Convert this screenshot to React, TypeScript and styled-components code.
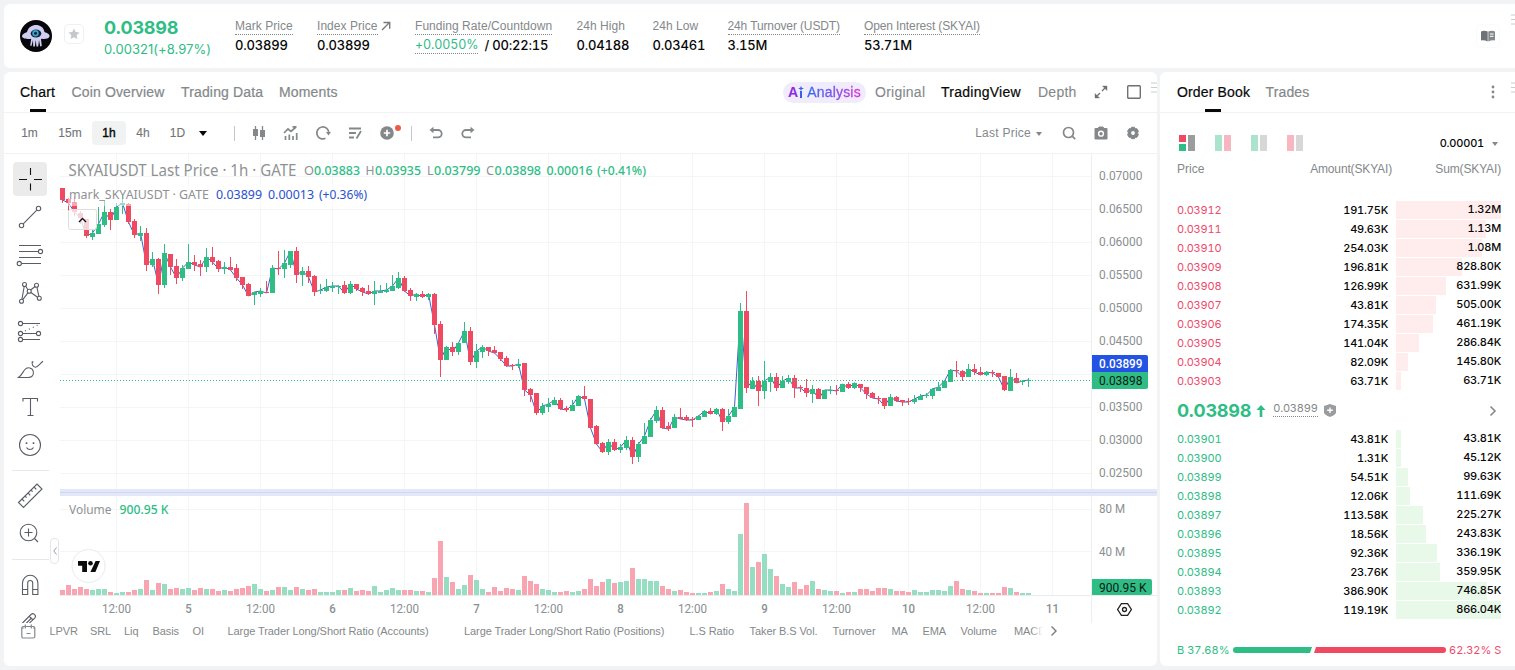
import React from "react";
import styled, { createGlobalStyle } from "styled-components";

const GREEN = "#2ebd85";
const RED = "#f04a63";
const GREY = "#84888a";

// [up(1)/down(0), high, body top, body bottom, low, volume]
const candles: number[][] = [
  [0, 188, 188, 200, 203, 5], [0, 198, 199, 203, 211, 10], [0, 196, 202, 212, 216, 6], [0, 211, 213, 218, 224, 8],
  [0, 219, 219, 236, 238, 6], [1, 230, 233, 237, 240, 5], [1, 207, 224, 234, 234, 6], [1, 200, 212, 225, 227, 6],
  [0, 209, 212, 220, 230, 3], [1, 203, 207, 220, 220, 2], [1, 194, 203, 205, 214, 3], [0, 203, 204, 222, 224, 3],
  [0, 219, 221, 235, 238, 5], [1, 226, 233, 236, 241, 6], [0, 228, 233, 265, 271, 15], [1, 252, 259, 265, 267, 5],
  [0, 258, 259, 285, 294, 12], [1, 244, 253, 285, 288, 11], [0, 254, 254, 267, 275, 6], [0, 259, 266, 278, 284, 7],
  [1, 265, 268, 278, 281, 6], [1, 244, 262, 269, 269, 7], [0, 255, 262, 265, 271, 5], [0, 260, 264, 267, 276, 7],
  [1, 248, 257, 267, 272, 6], [0, 247, 257, 262, 265, 6], [0, 260, 261, 269, 272, 4], [1, 262, 267, 269, 274, 5],
  [0, 257, 267, 270, 270, 4], [0, 264, 268, 278, 281, 6], [0, 277, 277, 285, 289, 7], [0, 283, 284, 296, 296, 9],
  [1, 292, 292, 295, 305, 11], [1, 288, 291, 294, 297, 6], [0, 281, 292, 293, 293, 4], [1, 265, 268, 293, 293, 5],
  [0, 251, 268, 269, 275, 8], [1, 250, 263, 269, 278, 8], [1, 251, 251, 265, 268, 5], [0, 247, 251, 275, 283, 8],
  [1, 267, 271, 275, 286, 6], [0, 266, 271, 277, 283, 5], [0, 275, 276, 292, 296, 6], [1, 284, 290, 291, 294, 3],
  [1, 279, 287, 291, 292, 3], [1, 282, 286, 288, 292, 3], [1, 285, 286, 287, 294, 5], [0, 281, 285, 293, 294, 5],
  [1, 281, 284, 293, 294, 7], [0, 284, 284, 289, 291, 4], [0, 287, 288, 292, 296, 5], [0, 285, 291, 294, 295, 4],
  [1, 281, 291, 294, 305, 9], [1, 285, 291, 293, 293, 3], [1, 283, 290, 292, 293, 5], [1, 275, 286, 291, 291, 7],
  [1, 272, 278, 288, 289, 5], [0, 276, 278, 291, 292, 5], [0, 288, 290, 296, 301, 5], [1, 293, 294, 297, 301, 4],
  [0, 291, 294, 297, 298, 4], [1, 293, 294, 297, 300, 3], [0, 293, 294, 325, 334, 17], [0, 321, 324, 360, 377, 54],
  [1, 346, 347, 360, 360, 18], [0, 342, 347, 352, 356, 13], [1, 342, 343, 352, 355, 6], [1, 322, 331, 343, 343, 10],
  [0, 327, 331, 362, 365, 20], [1, 344, 351, 362, 368, 15], [1, 345, 347, 352, 358, 6], [0, 347, 347, 351, 356, 3],
  [0, 346, 350, 353, 353, 8], [0, 352, 352, 359, 361, 4], [0, 356, 358, 366, 367, 7], [0, 364, 365, 366, 370, 6],
  [1, 359, 364, 366, 368, 5], [0, 363, 363, 390, 396, 19], [0, 388, 389, 395, 402, 14], [0, 393, 393, 413, 415, 11],
  [1, 403, 406, 413, 415, 6], [1, 398, 404, 407, 412, 5], [1, 397, 400, 405, 405, 3], [0, 398, 400, 409, 410, 3],
  [0, 406, 408, 410, 412, 4], [1, 400, 405, 411, 411, 3], [1, 395, 396, 406, 406, 4], [0, 386, 396, 399, 400, 6],
  [0, 399, 399, 428, 429, 16], [0, 425, 426, 444, 445, 9], [0, 442, 443, 452, 453, 13], [1, 439, 442, 452, 455, 16],
  [0, 439, 442, 450, 451, 12], [1, 444, 447, 450, 453, 13], [1, 436, 440, 448, 450, 14], [0, 437, 440, 457, 464, 27],
  [1, 442, 444, 457, 462, 16], [1, 423, 436, 444, 444, 16], [1, 418, 420, 437, 437, 14], [1, 406, 410, 421, 423, 14],
  [0, 407, 410, 428, 429, 9], [0, 422, 426, 429, 431, 6], [1, 414, 417, 428, 428, 4], [0, 408, 417, 419, 419, 5],
  [0, 415, 417, 420, 421, 3], [0, 417, 419, 420, 427, 2], [1, 415, 416, 420, 420, 2], [1, 410, 411, 417, 417, 2],
  [0, 408, 411, 414, 414, 3], [1, 408, 409, 414, 415, 4], [0, 408, 409, 422, 431, 11], [1, 409, 416, 422, 424, 6],
  [1, 406, 407, 417, 417, 4], [1, 303, 311, 409, 409, 61], [0, 291, 311, 388, 393, 92], [1, 377, 381, 389, 389, 28],
  [0, 376, 381, 391, 406, 33], [1, 361, 381, 391, 399, 41], [1, 373, 377, 382, 392, 26], [0, 373, 377, 388, 391, 19],
  [1, 376, 381, 388, 388, 11], [1, 375, 378, 382, 384, 8], [0, 375, 378, 388, 398, 13], [0, 385, 387, 388, 392, 6],
  [0, 379, 388, 393, 397, 10], [1, 385, 389, 394, 403, 14], [0, 388, 389, 399, 399, 6], [1, 390, 390, 399, 399, 5],
  [1, 386, 390, 391, 394, 4], [0, 385, 390, 391, 395, 4], [1, 384, 384, 392, 392, 2], [0, 382, 384, 388, 389, 3],
  [1, 383, 383, 388, 389, 3], [0, 384, 384, 388, 392, 6], [0, 387, 387, 394, 399, 6], [0, 392, 393, 398, 398, 4],
  [0, 396, 398, 399, 404, 7], [0, 398, 398, 406, 409, 7], [1, 394, 397, 406, 406, 6], [0, 396, 397, 401, 402, 4],
  [0, 400, 400, 402, 406, 4], [0, 398, 401, 402, 405, 3], [1, 395, 399, 402, 404, 5], [1, 394, 396, 400, 400, 3],
  [1, 393, 395, 396, 398, 3], [1, 388, 389, 396, 399, 5], [1, 382, 387, 391, 391, 5], [1, 381, 381, 388, 388, 4],
  [1, 369, 370, 382, 382, 9], [0, 361, 370, 371, 377, 14], [0, 370, 371, 377, 381, 6], [1, 364, 369, 377, 377, 5],
  [0, 364, 369, 372, 375, 4], [0, 367, 372, 375, 375, 2], [1, 371, 372, 375, 376, 2], [0, 370, 372, 373, 377, 2],
  [0, 373, 373, 377, 377, 2], [0, 376, 376, 390, 391, 8], [1, 369, 377, 391, 391, 7], [0, 373, 378, 383, 383, 3],
  [1, 380, 381, 382, 385, 2], [1, 378, 380, 381, 387, 2],
];

const stats = [
  { label: "Mark Price", value: "0.03899", width: 58, dotted: true },
  { label: "Index Price", value: "0.03899", width: 74, dotted: true, arrow: true },
  { label: "Funding Rate/Countdown", rate: "+0.0050%", value: "/ 00:22:15", width: 137.5, dotted: true },
  { label: "24h High", value: "0.04188", width: 52 },
  { label: "24h Low", value: "0.03461", width: 51 },
  { label: "24h Turnover (USDT)", value: "3.15M", width: 112.5, dotted: true, tight: true },
  { label: "Open Interest (SKYAI)", value: "53.71M", width: 116, dotted: true, tight: true },
];

const asks = [
  ["0.03912", "191.75K", "1.32M", 1320],
  ["0.03911", "49.63K", "1.13M", 1130],
  ["0.03910", "254.03K", "1.08M", 1080],
  ["0.03909", "196.81K", "828.80K", 828.8],
  ["0.03908", "126.99K", "631.99K", 631.99],
  ["0.03907", "43.81K", "505.00K", 505],
  ["0.03906", "174.35K", "461.19K", 461.19],
  ["0.03905", "141.04K", "286.84K", 286.84],
  ["0.03904", "82.09K", "145.80K", 145.8],
  ["0.03903", "63.71K", "63.71K", 63.71],
] as const;

const bids = [
  ["0.03901", "43.81K", "43.81K", 43.81],
  ["0.03900", "1.31K", "45.12K", 45.12],
  ["0.03899", "54.51K", "99.63K", 99.63],
  ["0.03898", "12.06K", "111.69K", 111.69],
  ["0.03897", "113.58K", "225.27K", 225.27],
  ["0.03896", "18.56K", "243.83K", 243.83],
  ["0.03895", "92.36K", "336.19K", 336.19],
  ["0.03894", "23.76K", "359.95K", 359.95],
  ["0.03893", "386.90K", "746.85K", 746.85],
  ["0.03892", "119.19K", "866.04K", 866.04],
] as const;

// label and the width of its slot
const indicators: [string, number][] = [
  ["LPVR", 40.5], ["SRL", 34], ["Liq", 28.5], ["Basis", 40], ["OI", 35],
  ["Large Trader Long/Short Ratio (Accounts)", 236.5],
  ["Large Trader Long/Short Ratio (Positions)", 225.5],
  ["L.S Ratio", 60], ["Taker B.S Vol.", 83], ["Turnover", 59], ["MA", 31], ["EMA", 38], ["Volume", 53.5], ["MACD", 32],
];

const priceTicks = ["0.07000", "0.06500", "0.06000", "0.05500", "0.05000", "0.04500", "", "0.03500", "0.03000", "0.02500"];
const timeTicks = ["12:00", "5", "12:00", "6", "12:00", "7", "12:00", "8", "12:00", "9", "12:00", "10", "12:00", "11"];

const Label = ({ x, y, w, size = 12, fill = "#8b8f91", weight = 400, font = "Roboto, sans-serif", children }: {
  x: number; y: number; w: number; size?: number; fill?: string; weight?: number; font?: string; children: string;
}) => (
  <text x={x} y={y} textLength={w} lengthAdjust="spacingAndGlyphs" fontSize={size} fill={fill} fontWeight={weight} fontFamily={font}>
    {children}
  </text>
);

const LEGEND = '"Noto Sans", sans-serif';

const PriceChart = () => {
  const line = candles.map(([up, , top, bottom], i) => `${62.5 + i * 6},${up ? top : bottom}`).join(" ");
  return (
    <ChartSvg viewBox="60 154 1097 469">
      <g fill="#f4f5f6">
        {priceTicks.map((_, i) => <rect key={i} x="60" y={176 + i * 33} width="1032" height="1" />)}
        {timeTicks.map((_, i) => <rect key={i} x={116 + i * 72} y="154" width="1" height="441" />)}
        <rect x="60" y="509" width="1032" height="1" />
        <rect x="60" y="551" width="1032" height="1" />
      </g>
      <rect x="60" y="595" width="1097" height="1" fill="#e9ebec" />
      <rect x="1091" y="154" width="1" height="469" fill="#eceeef" />

      {candles.map(([up, , , , , vol], i) => (
        <rect key={i} x={60 + i * 6} y={595 - vol} width="5" height={vol} fill={up ? "#96dec2" : "#f8a5b1"} />
      ))}
      <polyline points={line} fill="none" stroke="#2a4fc8" strokeWidth="1" opacity="0.9" />
      {candles.map(([up, high, top, bottom, low], i) => (
        <g key={i} fill={up ? GREEN : RED}>
          <rect x={62 + i * 6} y={high} width="1" height={low - high} />
          <rect x={60 + i * 6} y={top} width="5" height={bottom - top} />
        </g>
      ))}
      <path d="M60 380.5H1092" stroke="#2ebd85" strokeDasharray="1 2" />

      <rect x="60" y="489" width="1097" height="7" fill="#e2e8f8" />
      <rect x="60" y="492" width="1097" height="1" fill="#cfd8ef" />

      <rect x="68" y="184" width="304" height="22" fill="#fff" opacity="0.5" />
      <Label x={68.5} y={176} w={228} size={15.5} fill="#8f9294" font={LEGEND}>SKYAIUSDT Last Price · 1h · GATE</Label>
      <Label x={304} y={175} w={10} size={12.5} fill="#8f9294" font={LEGEND}>O</Label>
      <Label x={314} y={175} w={46} size={12.5} fill={GREEN} weight={500} font={LEGEND}>0.03883</Label>
      <Label x={365.5} y={175} w={9} size={12.5} fill="#8f9294" font={LEGEND}>H</Label>
      <Label x={375} y={175} w={46} size={12.5} fill={GREEN} weight={500} font={LEGEND}>0.03935</Label>
      <Label x={427} y={175} w={6.5} size={12.5} fill="#8f9294" font={LEGEND}>L</Label>
      <Label x={434} y={175} w={46.5} size={12.5} fill={GREEN} weight={500} font={LEGEND}>0.03799</Label>
      <Label x={486} y={175} w={8} size={12.5} fill="#8f9294" font={LEGEND}>C</Label>
      <Label x={494.5} y={175} w={46.5} size={12.5} fill={GREEN} weight={500} font={LEGEND}>0.03898</Label>
      <Label x={546.5} y={175} w={46} size={12.5} fill={GREEN} weight={500} font={LEGEND}>0.00016</Label>
      <Label x={597} y={175} w={49} size={12.5} fill={GREEN} weight={500} font={LEGEND}>(+0.41%)</Label>
      <Label x={69} y={199} w={140} size={12.5} fill="#8f9294" font={LEGEND}>mark_SKYAIUSDT · GATE</Label>
      <Label x={216} y={199} w={46} size={12.5} fill="#2a50d0" font={LEGEND}>0.03899</Label>
      <Label x={268} y={199} w={46} size={12.5} fill="#2a50d0" font={LEGEND}>0.00013</Label>
      <Label x={319} y={199} w={48} size={12.5} fill="#2a50d0" font={LEGEND}>(+0.36%)</Label>
      <rect x="68.5" y="209.5" width="28" height="20" rx="2" fill="#fff" fillOpacity="0.75" stroke="#dcdee0" />
      <path d="M79 222l3.5-3.5 3.5 3.5" fill="none" stroke="#111" strokeWidth="1.4" />

      <Label x={69} y={514} w={42.5} size={12.5} fill="#8f9294" font={LEGEND}>Volume</Label>
      <Label x={119.5} y={514} w={49} size={12.5} fill={GREEN} weight={500} font={LEGEND}>900.95 K</Label>

      <circle cx="88.5" cy="566" r="16.5" fill="#fff" stroke="#e9eaec" />
      <path d="M78 561h9v11h-4.8v-6.2H78zM95.600 561H100l-4.600 11h-5z" fill="#0c0c0c" />
      <circle cx="90.500" cy="563.300" r="2.300" fill="#0c0c0c" />

      {priceTicks.map((t, i) => t && <Label key={t} x={1099} y={180 + i * 33} w={43.500}>{t}</Label>)}
      <Label x={1099} y={513} w={26}>80 M</Label>
      <Label x={1099} y={556} w={26}>40 M</Label>
      {timeTicks.map((t, i) => {
        const w = t.length > 2 ? 29 : t.length * 6.5;
        return <Label key={i} x={116.500 + i * 72 - w / 2} y={613} w={w} weight={t.length > 2 ? 400 : 500}>{t}</Label>;
      })}
      <path d="M1092 355h54a2 2 0 0 1 2 2v15h-56z" fill="#2453e3" />
      <path d="M1092 372h56v15a2 2 0 0 1-2 2h-54z" fill={GREEN} />
      <Label x={1099} y={368} w={43.500} fill="#fff" weight={500}>0.03899</Label>
      <Label x={1099} y={385} w={43.500} fill="#0d1a14">0.03898</Label>
      <path d="M1092 579h58a2 2 0 0 1 2 2v12a2 2 0 0 1-2 2h-58z" fill={GREEN} />
      <Label x={1099} y={592} w={47.500} fill="#0d1a14">900.95 K</Label>
      <g fill="none" stroke="#222" strokeWidth="1.300">
        <path d="M1121.400 603.700h6.200l3.800 5.800-3.800 5.800h-6.200l-3.800-5.800z" />
        <circle cx="1124.500" cy="609.500" r="2" />
      </g>
    </ChartSvg>
  );
};

// drawing tools, drawn on a 28px grid
const tools: Record<string, React.ReactNode> = {
  cross: <path d="M14.500 3v7M14.500 18.500v7M3 14.500h8M18 14.500h8" stroke="#111" />,
  trend: <><circle cx="5.500" cy="22.500" r="2.200" /><circle cx="22.500" cy="5.500" r="2.200" /><path d="M7.200 20.800L20.800 7.200" /></>,
  lines: <><path d="M3 4.500h22M3 10.500h19.500M3 16.500h22M5.500 22.500H25" /><circle cx="24.500" cy="10.500" r="2.100" /><circle cx="3.300" cy="22.500" r="2.100" /></>,
  pattern: <><circle cx="8.500" cy="5.500" r="2" /><circle cx="20.500" cy="6.200" r="2" /><circle cx="13.200" cy="12.300" r="2" /><circle cx="5.500" cy="22.300" r="2" /><circle cx="23.300" cy="19.300" r="2" /><path d="M8.200 7.500L5.900 20.300M9.700 7.200l2.300 3.500M14.600 11l4.500-3.500M20.900 8.200l2 9.100M14.900 13.500l6.700 4.700M11.900 13.900l-5.100 6.700" /></>,
  fib: <><circle cx="4.500" cy="6.500" r="2.100" /><circle cx="4.500" cy="16.500" r="2.100" /><circle cx="22.500" cy="16.500" r="2.100" /><circle cx="4.500" cy="22.500" r="2.100" /><path d="M6.600 6.500H24M6.600 16.500h13.800M6.600 22.500H24" /><path d="M9 14l13-6" strokeDasharray="1 3.300" /></>,
  brush: <path d="M2.500 22.500h9.500c4 0 6-2.500 5.300-6-.8-3.800-5.800-5.200-8.800-1.500-1.800 2.300-3 5.500-6 7.500zM16.300 6.500c-.8 2.800.5 5.300 3.200 5.800 2.700-.5 4.500-3.600 7.500-6M16.300 7.500l1-1" />,
  text: <path d="M7 8.500v-3h14.500v3M14.500 5.500V22.500M11.500 22.500h6" />,
  smile: <><circle cx="14" cy="14" r="10.500" /><path d="M10.500 16.500c1.500 2.700 5.500 2.700 7 0" /><path d="M10.500 11.300v1.600M17.500 11.300v1.600" strokeWidth="1.600" /></>,
  ruler: <path d="M2.500 21.500L21 3l5 5L7.500 26.500zM6 18l2.300 2.300M9 15l1.600 1.600M12 12l2.300 2.300M15 9l1.600 1.600M18 6l2.300 2.300" transform="translate(0 -1)" />,
  zoom: <><circle cx="12.500" cy="12.500" r="8.300" /><path d="M12.500 8.500v8M8.500 12.500h8M18.500 18.500l3.500 3.500" /></>,
  magnet: <path d="M6.500 23.500V12a7.700 7.700 0 0 1 15.400 0v11.500h-5.200V12a2.500 2.500 0 0 0-5 0v11.500zM6.500 18.500h5.200M16.700 18.500h5.200" />,
  pencil: <path d="M5 15.500l2.500-2.500L15 5.500c2-2.200 5.700.8 3.900 3.300L11 16.500M13.500 7.500l3.800 3.700M9.500 15l6-6" />,
};

const Tool = ({ name, active }: { name: string; active?: boolean }) => (
  <ToolItem>
    <ToolBox $active={active}>
      <svg width="28" height="28" viewBox="0 0 28 28" fill="none" stroke="#5a5d66" strokeWidth="1.100">{tools[name]}</svg>
    </ToolBox>
  </ToolItem>
);

const Side = ({ rows, up }: { rows: typeof asks | typeof bids; up?: boolean }) => {
  const max = up ? 866.04 : 1320;
  return (
    <div>
      {rows.map(([price, amount, sum, total]) => (
        <BookRow key={price}>
          <RowPrice $up={up}>{price}</RowPrice>
          <RowAmount>{amount}</RowAmount>
          <RowSum>
            <Depth $up={up} style={{ width: `${(total / max) * 100}%` }} />
            <span>{sum}</span>
          </RowSum>
        </BookRow>
      ))}
    </div>
  );
};

const BookMode = ({ left, right, split, faded }: { left: string; right: string; split?: boolean; faded?: boolean }) => (
  <svg width="16" height="16" opacity={faded ? 0.4 : 1}>
    {split ? <><rect width="7" height="7" fill={RED} /><rect y="9" width="7" height="7" fill={GREEN} /></> : <rect width="7" height="16" fill={left} />}
    <rect x="9" width="7" height="16" fill={right} />
  </svg>
);

const Grip = () => (
  <svg width="6" height="11" viewBox="0 0 6 11"><path d="M0 1h6M0 5.500h6M0 10h6" stroke="#c9ccce" /></svg>
);

const App = () => (
  <>
    <Global />
    <Page>
      <Header>
        <svg width="32" height="32" viewBox="0 0 32 32">
          <circle cx="16" cy="16" r="16" fill="#07070b" />
          <path d="M2 16.500c0-2.500 3-3.500 5-4.500C8.500 7 12 5 16 5s7.500 2 8.500 7c2.500 1 5.500 2 5 4.500-.8 2.300-5 2.800-7.500 2.300l-1 .2.800 7-1.600.5-1.200-6.500-.8 6.500h-1.700l-.8-6.500-.8 6.500h-1.700l-.2-6.500-1.500 6-1.300-.6 1-6.600c-3 .6-8.500 0-9.200-2.300z" fill="#cfcdf0" />
          <ellipse cx="16" cy="13.500" rx="5.300" ry="4" fill="#15203f" />
          <circle cx="15.500" cy="13.300" r="3.200" fill="#37a7c8" />
          <circle cx="15.500" cy="13.300" r="1.500" fill="#10203f" />
        </svg>
        <StarBox>
          <svg width="12" height="12" viewBox="0 0 24 24" fill="#c5c8ca"><path d="M12 1l3.300 7.200 7.700.9-5.700 5.300 1.500 7.800L12 18.300l-6.800 3.900 1.500-7.800L1 9.100l7.700-.9z" /></svg>
        </StarBox>
        <PriceBlock>
          <BigPrice>0.03898</BigPrice>
          <Change>0.00321(+8.97%)</Change>
        </PriceBlock>
        <Stats>
          {stats.map((s) => (
            <Stat key={s.label} $width={s.width}>
              <StatLabel>
                <StatName $dotted={s.dotted} $tight={s.tight}>{s.label}</StatName>
                {s.arrow && <svg width="10" height="10" viewBox="0 0 10 10" fill="none" stroke="#777b7d" strokeWidth="1.400"><path d="M1 9l7.500-7.500M2.500 1.500h6.200v6.200" /></svg>}
              </StatLabel>
              <StatValue>
                {s.rate && <Rate>{s.rate}</Rate>}
                {s.value}
              </StatValue>
            </Stat>
          ))}
        </Stats>
        <BookLink>
          <svg width="14" height="12" viewBox="0 0 14 12"><path d="M0 1.500C2.500.3 4.500.5 6.700 1.500V11.500C4.500 10.500 2.500 10 0 10.500z" fill="#6f7375" /><path d="M7.300 1.500C9.500.5 11.500.3 14 1.500v9c-2.500-.5-4.500 0-6.700 1z" fill="#84888a" /><path d="M9 4h3.500M9 6.300h3.500" stroke="#fff" /></svg>
        </BookLink>
        <HeadGrip><Grip /></HeadGrip>
      </Header>

      <Body>
        <ChartPanel>
          <TabBar>
            <Tab $active $w={35.5}>Chart</Tab>
            <Tab $w={93.5}>Coin Overview</Tab>
            <Tab $w={82}>Trading Data</Tab>
            <Tab $w={60}>Moments</Tab>
            <Views>
              <AiPill>
                <AiWord>A<svg width="6" height="12" viewBox="0 0 6 12"><path d="M2 5h2v7H2z" fill="#3c5cf0" /><path d="M3 0l.8 1.800L6 2.500l-2.200.7L3 5l-.8-1.800L0 2.500l2.200-.7z" fill="#2f66f2" /></svg></AiWord>
                <AiText>Analysis</AiText>
              </AiPill>
              <View $w={50}>Original</View>
              <View $w={81} $active>TradingView</View>
              <View $w={39}>Depth</View>
              <svg width="14" height="14" viewBox="0 0 14 14" fill="#6d7173" stroke="#6d7173" strokeWidth="1.300"><path d="M8.500 1h4.500v4.500zM1 8.500V13h4.500z" strokeWidth=".4" /><path d="M8 6l3-3M6 8l-3 3" /></svg>
              <svg width="14" height="14" viewBox="0 0 14 14" fill="none" stroke="#6d7173" strokeWidth="1.400"><rect x=".7" y=".7" width="12.600" height="12.600" rx="1" /></svg>
            </Views>
            <TabGrip><Grip /></TabGrip>
          </TabBar>

          <Toolbar>
            <Period $w={17}>1m</Period>
            <Period $w={24}>15m</Period>
            <Period $w={14} $active>1h</Period>
            <Period $w={14}>4h</Period>
            <Period $w={15}>1D</Period>
            <Caret $size={4.5} $dark />
            <Divider $before={27} $after={16} />
            <Icons>
              <svg viewBox="0 0 16 16"><path d="M4.500 1v14M11.500 1v14" stroke={GREY} strokeWidth="1.300" /><path d="M2 4h5v7H2zM9 5h5v7H9z" fill={GREY} /></svg>
              <svg viewBox="0 0 16 16" fill="none" stroke={GREY} strokeWidth="1.700"><path d="M1 8l4-4 3 2.500L13 2M9.500 1.800H13.500M2.500 15v-4M6.300 15V9.500M10 15v-4M13.700 15V8" /></svg>
              <svg viewBox="0 0 16 16" fill="none" stroke={GREY} strokeWidth="1.700"><path d="M10.500 13.300A6 6 0 1 1 13.800 8" /><path d="M11 7h5l-2.500 3.500z" fill={GREY} stroke="none" /></svg>
              <svg viewBox="0 0 16 16" fill="none" stroke={GREY} strokeWidth="1.800"><path d="M2 3.500h12M2 8h7M2 12.500h5M14 6l-4.500 7.500" /></svg>
              <PlusBadge>
                <svg viewBox="0 0 16 16"><circle cx="8" cy="8" r="6.800" fill={GREY} /><path d="M8 4.800v6.400M4.800 8h6.400" stroke="#fff" strokeWidth="1.700" /></svg>
              </PlusBadge>
            </Icons>
            <Divider $before={16} $after={16} />
            <Icons>
              <svg viewBox="0 0 16 16" fill="none" stroke={GREY} strokeWidth="1.800"><path d="M3 5h7a3.700 3.700 0 0 1 0 7.400H5" /><path d="M5.500 1.800L1.500 5l4 3.200z" fill={GREY} stroke="none" /></svg>
              <svg viewBox="0 0 16 16" fill="none" stroke={GREY} strokeWidth="1.800"><path d="M13 5H6a3.700 3.700 0 0 0 0 7.400h5" /><path d="M10.500 1.800l4 3.200-4 3.200z" fill={GREY} stroke="none" /></svg>
            </Icons>
            <RightTools>
              <LastPrice>Last Price</LastPrice>
              <Caret $size={3.5} />
              <Icons>
                <svg viewBox="0 0 16 16" fill="none" stroke={GREY} strokeWidth="1.700"><circle cx="7.500" cy="7.500" r="5" /><path d="M11.200 11.200l3 3" /></svg>
                <svg viewBox="0 0 16 16"><path d="M2 3.500h3L6 2h4l1 1.500h3V14H2z" fill={GREY} stroke={GREY} /><circle cx="8" cy="8.700" r="3.100" fill="#fff" /><circle cx="8" cy="8.700" r="1.700" fill={GREY} /></svg>
                <svg viewBox="0 0 16 16"><path d="M6.500 2.300h3l.7 1.500 1.700-.1 1.500 2.600-.9 1.700.9 1.700-1.500 2.600-1.700-.1-.7 1.500h-3l-.7-1.500-1.700.1-1.500-2.600.9-1.700-.9-1.700 1.500-2.600 1.700.1z" fill={GREY} stroke={GREY} strokeLinejoin="round" /><circle cx="8" cy="8" r="1.900" fill="#fff" /></svg>
              </Icons>
            </RightTools>
          </Toolbar>

          <ChartRow>
            <ToolColumn>
              <Tool name="cross" active />
              {["trend", "lines", "pattern", "fib", "brush", "text", "smile"].map((n) => <Tool key={n} name={n} />)}
              <ToolRule />
              <Tool name="ruler" />
              <Tool name="zoom" />
              <ToolRule />
              <Tool name="magnet" />
              <Tool name="pencil" />
              <Collapse>
                <svg width="4" height="8" viewBox="0 0 4 8" fill="none" stroke="#9a9da0"><path d="M3.500.5L.8 4l2.700 3.500" /></svg>
              </Collapse>
            </ToolColumn>
            <PriceChart />
          </ChartRow>

          <IndicatorBar>
            <svg width="15" height="15" viewBox="0 0 15 15" fill="none" stroke="#84888a" strokeWidth="1.200"><rect x=".8" y="2.500" width="13" height="11.500" rx="1.500" /><path d="M4.300.5v4M10.300.5v4M5.500 9.500h4M.8 4h2M12 4h2" /></svg>
            <IndicatorList>
              {indicators.map(([label, w]) => <Indicator key={label} $w={w}>{label}</Indicator>)}
              <FadeOut />
            </IndicatorList>
            <svg width="8" height="12" viewBox="0 0 8 12" fill="none" stroke="#777b7d" strokeWidth="1.400"><path d="M1.500 1.500L6 6l-4.500 4.500" /></svg>
          </IndicatorBar>
        </ChartPanel>

        <BookPanel>
          <TabBar>
            <Tab $active $w={72.5}>Order Book</Tab>
            <Tab $w={45}>Trades</Tab>
            <BookMenu>
              <svg width="4" height="14" viewBox="0 0 4 14" fill="#84888a"><circle cx="2" cy="2" r="1.400" /><circle cx="2" cy="7" r="1.400" /><circle cx="2" cy="12" r="1.400" /></svg>
            </BookMenu>
            <BookGrip><Grip /></BookGrip>
          </TabBar>
          <ModeRow>
            <BookMode split left="" right="#9b9d9d" />
            <BookMode faded left={GREEN} right={RED} />
            <BookMode faded left={GREEN} right="#9b9d9d" />
            <BookMode faded left={RED} right="#9b9d9d" />
            <Step>0.00001</Step>
            <Caret $size={3.5} />
          </ModeRow>
          <BookHead>
            <span>Price</span>
            <span>Amount(SKYAI)</span>
            <span>Sum(SKYAI)</span>
          </BookHead>
          <Side rows={asks} />
          <MidRow>
            <BigPrice>0.03898</BigPrice>
            <svg width="10" height="12" viewBox="0 0 10 12" fill={GREEN}><path d="M5 0l4.500 5H6.300v7H3.700V5H.5z" /></svg>
            <MidMark>0.03899</MidMark>
            <svg width="12" height="13" viewBox="0 0 12 13"><path d="M6 0l6 2v6c0 2.500-3.500 4-6 5-2.500-1-6-2.500-6-5V2z" fill="#9a9da0" /><path d="M6 3.500v5.600M3.200 6.300h5.600" stroke="#fff" strokeWidth="1.400" /></svg>
            <MidChevron width="8" height="12" viewBox="0 0 8 12" fill="none" stroke="#84888a" strokeWidth="1.600"><path d="M1.500 1.500L6 6l-4.500 4.500" /></MidChevron>
          </MidRow>
          <Side rows={bids} up />
          <Ratio>
            <RatioText $up>B 37.68%</RatioText>
            <RatioBar viewBox="0 0 213 6">
              <path d="M3 0h76l-2 6H3a3 3 0 0 1 0-6z" fill={GREEN} />
              <path d="M83 0h127a3 3 0 0 1 0 6H81z" fill={RED} />
            </RatioBar>
            <RatioText>62.32% S</RatioText>
          </Ratio>
        </BookPanel>
      </Body>
    </Page>
  </>
);

export default App;

const NUMERIC = `
  font-family: Inter, "Liberation Sans", sans-serif;
  font-variant-numeric: tabular-nums;
  letter-spacing: -0.2px;
`;

const Global = createGlobalStyle`
  * { box-sizing: border-box; }
  body {
    margin: 0;
    overflow: hidden;
    background: #f2f3f4;
    font-family: "Liberation Sans", Arial, sans-serif;
    color: #070808;
  }
  svg { display: block; flex: none; }
`;

const Page = styled.div`
  width: 1515px;
  height: 670px;
  padding: 4px 0 4px 4px;
  display: flex;
  flex-direction: column;
  gap: 4px;
`;

const Header = styled.header`
  height: 64px;
  flex: none;
  display: flex;
  align-items: center;
  padding-left: 16px;
  background: #fff;
  border-radius: 6px 0 0 6px;
  position: relative;
`;

const StarBox = styled.div`
  width: 20px;
  height: 20px;
  margin: -4px 20px 0 12px;
  display: flex;
  align-items: center;
  justify-content: center;
  border: 1px solid #eff0f1;
  border-radius: 5px;
`;

const PriceBlock = styled.div`
  width: 131px;
  padding-top: 2px;
`;

const BigPrice = styled.div`
  font-family: Inter, "Liberation Sans", sans-serif;
  font-size: 18px;
  line-height: 24px;
  font-weight: 700;
  letter-spacing: -0.25px;
  color: ${GREEN};
`;

const Change = styled.div`
  font-family: Inter, "Liberation Sans", sans-serif;
  font-size: 13px;
  line-height: 19px;
  letter-spacing: 0.05px;
  color: ${GREEN};
`;

const Stats = styled.div`
  display: flex;
  gap: 24px;
`;

const Stat = styled.div<{ $width: number }>`
  width: ${(p) => p.$width}px;
  white-space: nowrap;
`;

const StatLabel = styled.div`
  display: flex;
  gap: 3px;
  align-items: center;
  height: 17px;
`;

const StatName = styled.span<{ $dotted?: boolean; $tight?: boolean }>`
  height: 17px;
  font-size: 12px;
  line-height: 16px;
  letter-spacing: ${(p) => (p.$tight ? -0.12 : 0.05)}px;
  color: ${GREY};
  border-bottom: 1px ${(p) => (p.$dotted ? "dotted #84888a" : "solid transparent")};
`;

const StatValue = styled.div`
  ${NUMERIC}
  display: flex;
  gap: 6px;
  height: 20px;
  font-size: 13px;
  line-height: 21px;
  font-weight: 500;
`;

const Rate = styled.span`
  height: 19px;
  line-height: 20px;
  font-size: 12.5px;
  letter-spacing: -0.1px;
  font-weight: 400;
  color: ${GREEN};
  border-bottom: 1px dotted #84888a;
`;

const BookLink = styled.div`
  width: 24px;
  height: 24px;
  margin: 0 15px 0 auto;
  display: flex;
  align-items: center;
  justify-content: center;
  border: 1px solid #fafafa;
  border-radius: 6px;
`;

const HeadGrip = styled.div`
  position: absolute;
  right: -2px;
  top: 10px;
`;

const Body = styled.main`
  flex: 1;
  display: flex;
  gap: 3px;
`;

const ChartPanel = styled.section`
  width: 1153px;
  background: #fff;
  border-radius: 6px;
`;

const TabBar = styled.div`
  height: 41px;
  display: flex;
  gap: 16px;
  padding: 0 16px;
  border-bottom: 1px solid #f1f2f3;
  position: relative;
`;

const Tab = styled.div<{ $active?: boolean; $w: number }>`
  width: ${(p) => p.$w}px;
  height: 40px;
  line-height: 40px;
  font-size: 14px;
  letter-spacing: 0.15px;
  -webkit-text-stroke: 0.2px currentColor;
  white-space: nowrap;
  color: ${(p) => (p.$active ? "#070808" : GREY)};

  &::after {
    content: "";
    display: ${(p) => (p.$active ? "block" : "none")};
    width: 16px;
    height: 3px;
    margin: -3px auto 0;
    background: #070808;
  }
`;

const Views = styled.div`
  display: flex;
  align-items: center;
  margin-left: auto;
  height: 40px;

  & > svg {
    margin-left: 17px;
  }
  & > svg + svg {
    margin-left: 19px;
  }
`;

const AiPill = styled.div`
  width: 83px;
  height: 21px;
  padding-left: 5px;
  display: flex;
  align-items: center;
  gap: 3px;
  border-radius: 11px;
  background: #f1ecfc;
  font-size: 14px;
`;

const AiWord = styled.span`
  display: flex;
  align-items: center;
  font-weight: 700;
  color: #8a2be2;
`;

const AiText = styled.span`
  letter-spacing: 0.2px;
  -webkit-text-stroke: 0.3px transparent;
  background: linear-gradient(90deg, #2f6bf2, #8a4be8 60%, #e02fd8);
  background-clip: text;
  -webkit-background-clip: text;
  color: transparent;
`;

const View = styled.div<{ $active?: boolean; $w: number }>`
  width: ${(p) => p.$w}px;
  margin-left: ${(p) => (p.$w === 50 ? 9 : 16)}px;
  font-size: 14px;
  letter-spacing: 0.25px;
  -webkit-text-stroke: ${(p) => (p.$active ? 0.2 : 0.1)}px currentColor;
  white-space: nowrap;
  color: ${(p) => (p.$active ? "#070808" : GREY)};
`;

const TabGrip = styled.div`
  position: absolute;
  right: 0;
  top: 10px;
`;

const Toolbar = styled.div`
  height: 41px;
  display: flex;
  align-items: center;
  padding: 0 16px 0 7px;
  border-bottom: 1px solid #f1f2f3;
`;

const Period = styled.div<{ $active?: boolean; $w: number }>`
  width: ${(p) => p.$w + 20}px;
  height: 24px;
  line-height: 24px;
  text-align: center;
  font-size: 12px;
  border-radius: 4px;
  -webkit-text-stroke: ${(p) => (p.$active ? 0.4 : 0.1)}px currentColor;
  background: ${(p) => (p.$active ? "#f1f3f3" : "transparent")};
  color: ${(p) => (p.$active ? "#070808" : "#707476")};
`;

const Caret = styled.i<{ $size: number; $dark?: boolean }>`
  margin: 1px 0 0 ${(p) => (p.$dark ? 4 : 5)}px;
  border: ${(p) => p.$size}px solid transparent;
  border-top: ${(p) => p.$size + 0.5}px solid ${(p) => (p.$dark ? "#070808" : GREY)};
  border-bottom: 0;
`;

const Divider = styled.i<{ $before: number; $after: number }>`
  width: 1px;
  height: 15px;
  margin: 0 ${(p) => p.$after}px 0 ${(p) => p.$before}px;
  background: #c4c7c9;
`;

const Icons = styled.div`
  display: flex;
  gap: 16px;

  svg {
    width: 16px;
    height: 16px;
  }
`;

const PlusBadge = styled.div`
  position: relative;

  &::after {
    content: "";
    position: absolute;
    right: -6px;
    top: 0;
    width: 6px;
    height: 6px;
    border-radius: 50%;
    background: #ee5a4a;
  }
`;

const RightTools = styled.div`
  display: flex;
  align-items: center;
  margin-left: auto;

  ${Icons} {
    margin-left: 19px;
  }
`;

const LastPrice = styled.span`
  font-size: 12px;
  letter-spacing: 0.25px;
  color: ${GREY};
`;

const ChartRow = styled.div`
  height: 469px;
  display: flex;
`;

const ToolColumn = styled.div`
  width: 56px;
  padding: 6px 5px 0 0;
  overflow: hidden;
  position: relative;
`;

const ToolItem = styled.div`
  height: 38px;
  display: flex;
  align-items: center;
  justify-content: center;
`;

const ToolBox = styled.div<{ $active?: boolean }>`
  width: 34px;
  height: 34px;
  padding: 3px;
  border-radius: 4px;
  background: ${(p) => (p.$active ? "#ebebeb" : "transparent")};
`;

const ToolRule = styled.div`
  height: 1px;
  margin: 6px 6px 6px 8px;
  background: #e6e8ea;
`;

const Collapse = styled.div`
  position: absolute;
  left: 46px;
  top: 384px;
  width: 9px;
  height: 26px;
  display: flex;
  align-items: center;
  justify-content: center;
  border: 1px solid #e4e6e8;
  border-radius: 4px;
  background: #fff;
`;

const ChartSvg = styled.svg`
  width: 1097px;
  height: 469px;
`;

const IndicatorBar = styled.div`
  height: 16px;
  display: flex;
  align-items: center;
  padding-left: 17px;
`;

const IndicatorList = styled.div`
  width: 993px;
  margin: 0 7px 0 13.5px;
  display: flex;
  overflow: hidden;
  position: relative;
`;

const Indicator = styled.span<{ $w: number }>`
  flex: none;
  width: ${(p) => p.$w}px;
  font-size: 11px;
  line-height: 16px;
  letter-spacing: -0.08px;
  white-space: nowrap;
  color: ${GREY};
`;

const FadeOut = styled.div`
  position: absolute;
  right: 0;
  top: 0;
  width: 12px;
  height: 16px;
  background: linear-gradient(90deg, rgba(255, 255, 255, 0), #fff);
`;

const BookPanel = styled.section`
  flex: 1;
  background: #fff;
  border-radius: 6px 0 0 6px;

  ${TabBar} {
    padding-left: 17px;
  }
`;

const BookMenu = styled.div`
  display: flex;
  align-items: center;
  height: 40px;
  margin: 0 4px 0 auto;
`;

const BookGrip = styled.div`
  position: absolute;
  right: -2px;
  top: 10px;
`;

const ModeRow = styled.div`
  height: 16px;
  margin: 22px 17px 0 19px;
  display: flex;
  align-items: center;
  gap: 20px;

  ${Caret} {
    margin-left: -12px;
  }
`;

const Step = styled.span`
  ${NUMERIC}
  margin-left: auto;
  font-size: 11px;
  font-weight: 500;
`;

const BookHead = styled.div`
  height: 18px;
  margin: 9px 14px 23px 17px;
  display: grid;
  grid-template-columns: 60px 155px 109px;
  font-size: 12px;
  line-height: 18px;
  color: ${GREY};

  span + span {
    text-align: right;
    letter-spacing: -0.15px;
  }
`;

const BookRow = styled.div`
  ${NUMERIC}
  height: 19px;
  margin: 0 14px 0 17px;
  display: grid;
  grid-template-columns: 60px 151px 8px 105px;
  font-size: 11px;
  line-height: 19px;
`;

const RowPrice = styled.span<{ $up?: boolean }>`
  color: ${(p) => (p.$up ? GREEN : "#ee4a6a")};
`;

const RowAmount = styled.span`
  text-align: right;
  font-weight: 500;
`;

const RowSum = styled.span`
  grid-column: 4;
  position: relative;
  text-align: right;
  line-height: 17px;
  font-weight: 500;

  span {
    position: relative;
  }
`;

const Depth = styled.i<{ $up?: boolean }>`
  position: absolute;
  left: 0;
  top: 0;
  height: 18px;
  background: ${(p) => (p.$up ? "#e8f8e9" : "#ffecec")};
`;

const MidRow = styled.div`
  height: 39px;
  padding: 0 18px 0 17px;
  display: flex;
  align-items: center;

  & > svg {
    margin-left: 5px;
  }
`;

const MidMark = styled.span`
  ${NUMERIC}
  height: 15px;
  margin: 0 1px 2px 7px;
  font-size: 11px;
  line-height: 13px;
  color: ${GREY};
  border-bottom: 1px dotted #84888a;
`;

const MidChevron = styled.svg`
  && {
    margin-left: auto;
  }
`;

const Ratio = styled.div`
  height: 16px;
  margin: 22px 14px 0 17px;
  display: flex;
  align-items: center;
  justify-content: space-between;
`;

const RatioBar = styled.svg`
  width: 213px;
  height: 6px;
`;

const RatioText = styled.span<{ $up?: boolean }>`
  ${NUMERIC}
  width: 52px;
  font-size: 11px;
  letter-spacing: 0;
  text-align: ${(p) => (p.$up ? "left" : "right")};
  white-space: nowrap;
  color: ${(p) => (p.$up ? GREEN : "#ee4a6a")};
`;
